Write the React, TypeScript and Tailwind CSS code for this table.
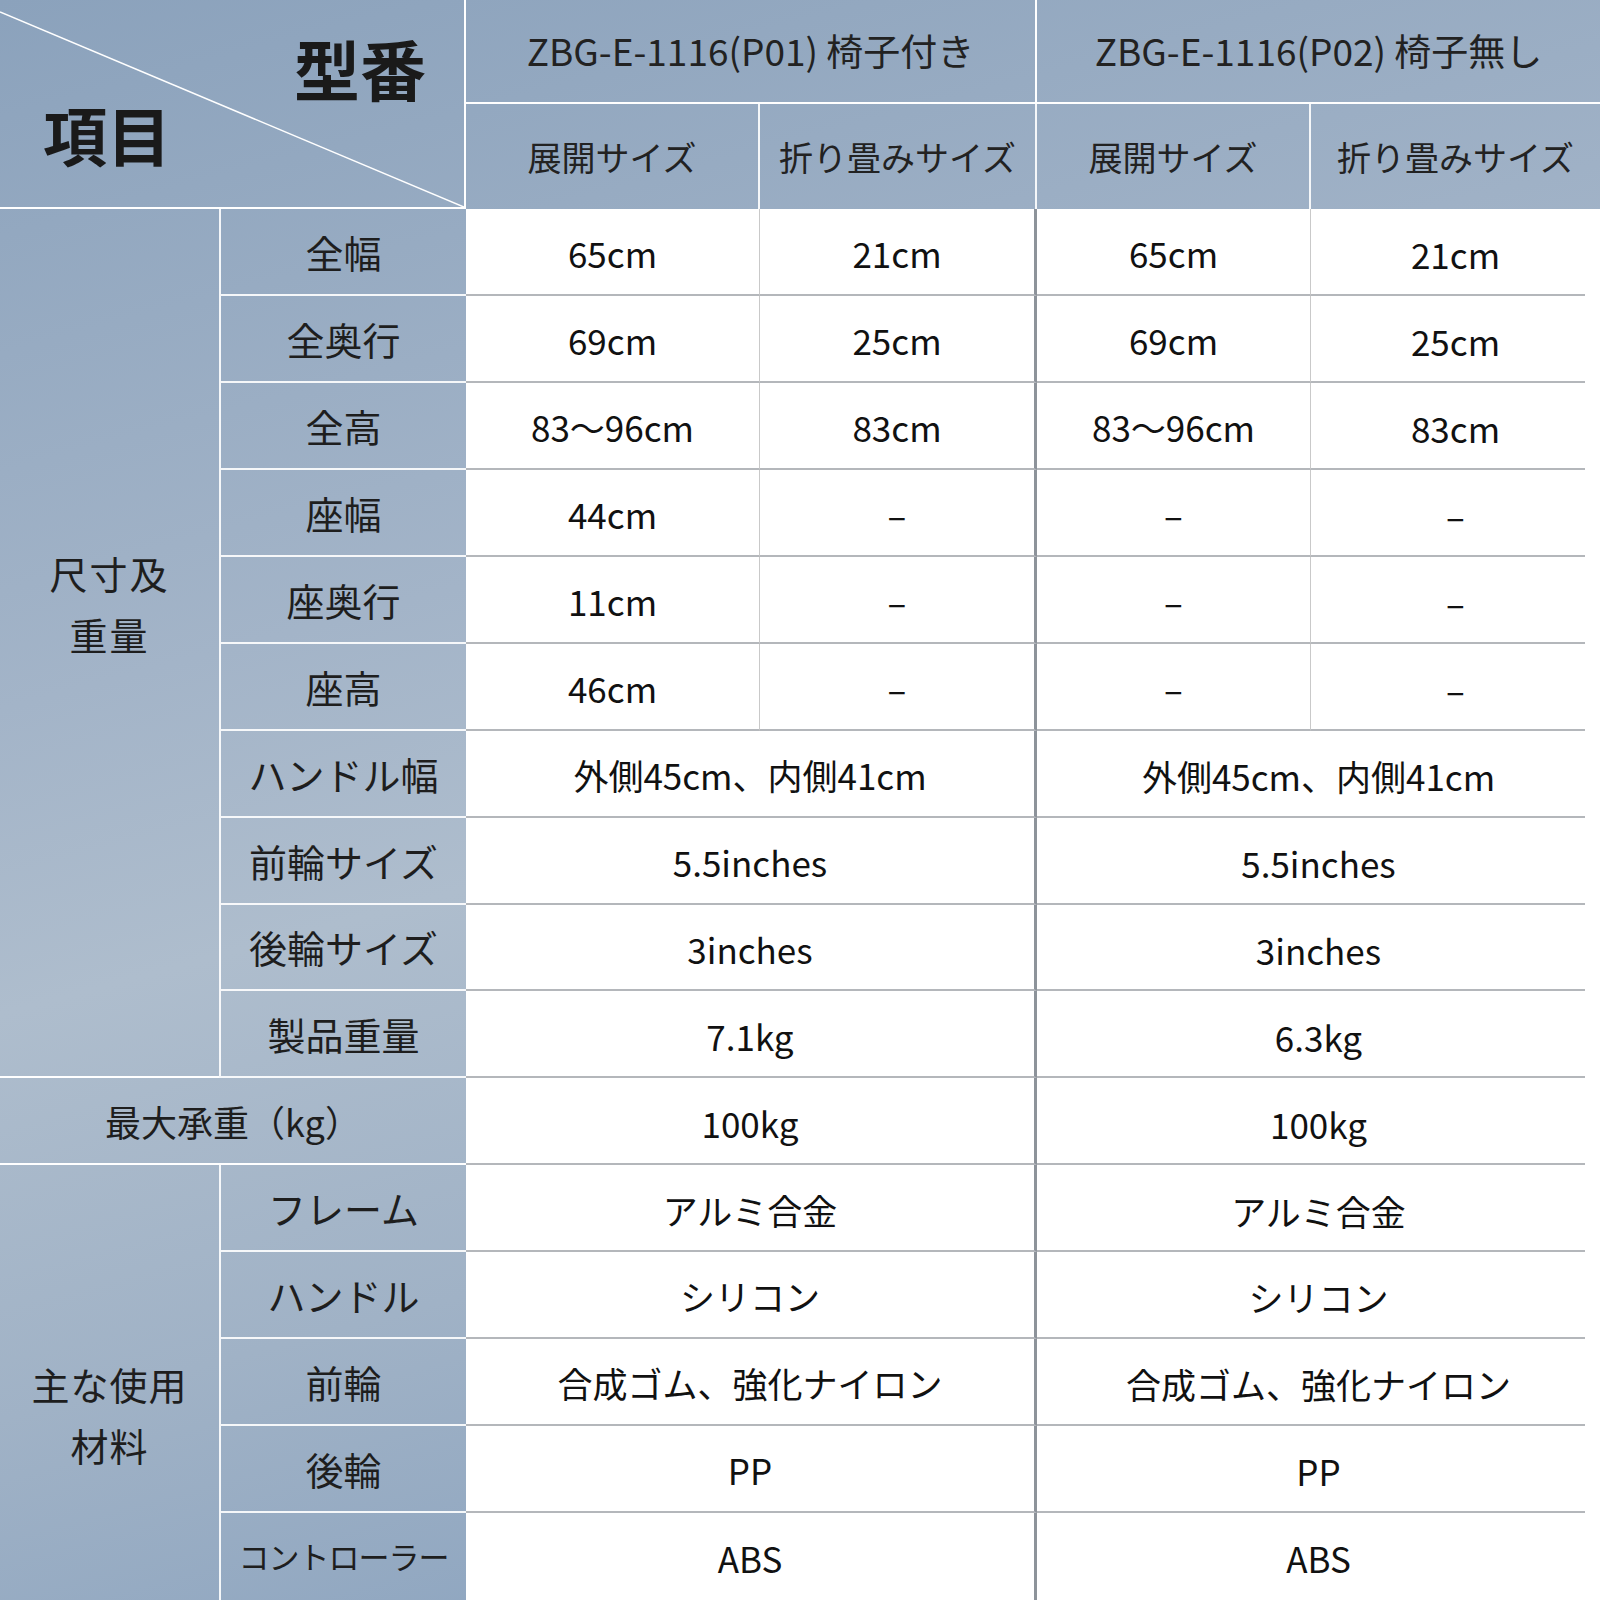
type Row = {
  label: string;
  vals?: string[];
  merged?: string[];
};

const sizeRows: Row[] = [
  { label: "全幅", vals: ["65cm", "21cm", "65cm", "21cm"] },
  { label: "全奥行", vals: ["69cm", "25cm", "69cm", "25cm"] },
  { label: "全高", vals: ["83〜96cm", "83cm", "83〜96cm", "83cm"] },
  { label: "座幅", vals: ["44cm", "–", "–", "–"] },
  { label: "座奥行", vals: ["11cm", "–", "–", "–"] },
  { label: "座高", vals: ["46cm", "–", "–", "–"] },
  { label: "ハンドル幅", merged: ["外側45cm、内側41cm", "外側45cm、内側41cm"] },
  { label: "前輪サイズ", merged: ["5.5inches", "5.5inches"] },
  { label: "後輪サイズ", merged: ["3inches", "3inches"] },
  { label: "製品重量", merged: ["7.1kg", "6.3kg"] },
];

const materialRows: Row[] = [
  { label: "フレーム", merged: ["アルミ合金", "アルミ合金"] },
  { label: "ハンドル", merged: ["シリコン", "シリコン"] },
  { label: "前輪", merged: ["合成ゴム、強化ナイロン", "合成ゴム、強化ナイロン"] },
  { label: "後輪", merged: ["PP", "PP"] },
  { label: "コントローラー", merged: ["ABS", "ABS"] },
];

const font = "font-['Noto_Sans_CJK_JP','Noto_Sans',sans-serif]";

// bottom rule of the right-most column stops a little short of the edge
const shortRule =
  "relative after:absolute after:bottom-0 after:left-0 after:right-[15px] after:h-[2px] after:bg-[#b4b7bb] after:content-['']";

function Label({ text, last }: { text: string; last?: boolean }) {
  const small = text.length > 6;
  return (
    <div
      className={`flex items-center justify-center border-l-2 border-white/90 ${
        last ? "" : "border-b-2"
      } ${small ? "text-[31px] tracking-[-1px]" : "text-[38px]"} text-[#1e1e1e]`}
    >
      {text}
    </div>
  );
}

function DataCells({ row, last }: { row: Row; last?: boolean }) {
  const b = last ? "" : "border-b-2 border-b-[#b4b7bb]";
  if (row.vals) {
    return (
      <>
        {row.vals.map((v, i) => (
          <div
            key={i}
            className={`flex items-center justify-center bg-white pt-1 text-[35px] text-[#111] ${
              i === 3 ? (last ? "" : shortRule) : b
            } ${
              i === 1
                ? "border-r-[3px] border-r-[#8d939a]"
                : i === 3
                  ? ""
                  : "border-r-[1.5px] border-r-[#c9c9c9]"
            }`}
          >
            {v}
          </div>
        ))}
      </>
    );
  }
  return (
    <>
      {row.merged!.map((v, i) => (
        <div
          key={i}
          className={`col-span-2 flex items-center justify-center bg-white pt-1 text-[35px] text-[#111] ${
            i === 1 ? (last ? "" : shortRule) : b
          } ${i === 0 ? "border-r-[3px] border-r-[#8d939a]" : ""}`}
        >
          {v}
        </div>
      ))}
    </>
  );
}

export default function App() {
  return (
    <div
      className={`${font} grid h-[1600px] w-[1600px] grid-cols-[219px_247px_294px_277px_274px_289px] grid-rows-[104px_105px_repeat(16,minmax(0,1fr))] bg-[linear-gradient(165deg,#8ba2bc_0%,#a3b4c8_35%,#aebdcd_50%,#a0b2c6_70%,#829dbc_100%)] border-white`}
    >
      {/* top-left diagonal cell */}
      <div className="relative col-span-2 row-span-2 flex flex-col justify-between border-b-2 border-r-2 border-white pb-[42px] pl-[43px] pr-[38px] pt-[34px]">
        <svg className="absolute inset-0 h-full w-full" viewBox="0 0 464 207" preserveAspectRatio="none">
          <line x1="0" y1="12" x2="464" y2="207" stroke="#ffffff" strokeWidth="1.6" />
        </svg>
        <div className="relative self-end text-[66px] font-bold leading-none text-[#1a1a1a]">型番</div>
        <div className="relative self-start text-[64px] font-bold leading-none text-[#1a1a1a]">項目</div>
      </div>

      <div className="col-span-2 flex items-center justify-center border-b-2 border-r-2 border-white text-[37px] text-[#222]">
        ZBG-E-1116(P01) 椅子付き
      </div>
      <div className="col-span-2 flex items-center justify-center border-b-2 border-white text-[37px] text-[#222]">
        ZBG-E-1116(P02) 椅子無し
      </div>

      {["展開サイズ", "折り畳みサイズ", "展開サイズ", "折り畳みサイズ"].map((t, i) => (
        <div
          key={i}
          className={`flex items-center justify-center text-[34px] text-[#222] ${
            i < 3 ? "border-r-2 border-white/90" : ""
          }`}
        >
          {t}
        </div>
      ))}

      {sizeRows.map((row, i) => (
        <Row key={row.label} row={row} first={i === 0} group="size" />
      ))}

      <div className="col-span-2 flex items-center justify-center border-b-2 border-white text-[36px] text-[#1e1e1e]">
        最大承重（kg）
      </div>
      <DataCells row={{ label: "", merged: ["100kg", "100kg"] }} />

      {materialRows.map((row, i) => (
        <Row
          key={row.label}
          row={row}
          first={i === 0}
          group="material"
          last={i === materialRows.length - 1}
        />
      ))}
    </div>
  );
}

function Row({
  row,
  first,
  group,
  last,
}: {
  row: Row;
  first: boolean;
  group: "size" | "material";
  last?: boolean;
}) {
  return (
    <>
      {first && group === "size" && (
        <div className="row-span-10 flex flex-col items-center justify-center border-b-2 border-white pb-[80px] text-[38px] leading-[61px] tracking-[2px] text-[#1e1e1e]">
          <span>尺寸及</span>
          <span>重量</span>
        </div>
      )}
      {first && group === "material" && (
        <div className="row-span-5 flex flex-col items-center justify-center pt-[62px] text-[38px] leading-[61px] tracking-[1px] text-[#1e1e1e]">
          <span>主な使用</span>
          <span>材料</span>
        </div>
      )}
      <Label text={row.label} last={last} />
      <DataCells row={row} last={last} />
    </>
  );
}
